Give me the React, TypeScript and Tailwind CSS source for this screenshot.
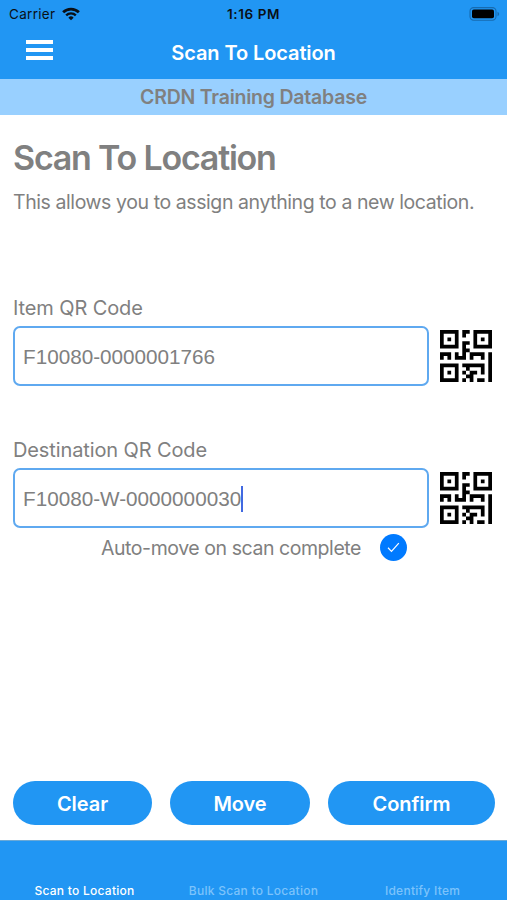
import { useState } from 'react';

const QR_MODULES = [
  '#####.##.#####',
  '#...#.#..#...#',
  '#.#.#....#.#.#',
  '#...#.##.#...#',
  '#####.#..#####',
  '......##......',
  '###.#.#.####.#',
  '#.#.###.#..#.#',
  '.............#',
  '#####.######.#',
  '#...#..#...#.#',
  '#.#.#.#.##.#.#',
  '#...#..##....#',
  '#####.#.#.##.#',
];

// one path for all modules, so no seams show between neighbours
const QR_PATH = QR_MODULES.map((row, y) =>
  row
    .split('')
    .map((cell, x) => (cell === '#' ? `M${x} ${y}h1v1h-1z` : ''))
    .join('')
).join('');

const QrIcon = () => (
  <svg viewBox="0 0 14 14" className="h-[52px] w-[52px]" fill="#000">
    <path d={QR_PATH} />
  </svg>
);

const WifiIcon = () => (
  <svg viewBox="0 0 19 14" className="ml-[6px] h-[14px] w-[18px]" fill="none" stroke="#0a1016">
    <path d="M1.2 5.2a11.8 11.8 0 0 1 16.6 0" strokeWidth="2.9" />
    <path d="M4.4 8.4a7.2 7.2 0 0 1 10.2 0" strokeWidth="2.5" />
    <path d="M9.5 13.6 6.7 10.9a3.9 3.9 0 0 1 5.6 0Z" fill="#0a1016" stroke="none" />
  </svg>
);

const BatteryIcon = () => (
  <svg viewBox="0 0 32 14" className="h-[14px] w-[32px]">
    <rect x="1" y="0.6" width="26" height="12.6" rx="3.6" fill="none" stroke="#176bb0" strokeWidth="1.1" />
    <rect x="3" y="2.5" width="22" height="8.8" rx="1.8" fill="#000" />
    <path d="M28.5 4.7c2.2.8 2.2 3.7 0 4.5Z" fill="#176bb0" />
  </svg>
);

interface CodeFieldProps {
  label: string;
  value: string;
  focused?: boolean;
}

const CodeField = ({ label, value, focused }: CodeFieldProps) => (
  <div>
    <div className="h-[30px] text-[20px] leading-[24px] tracking-[-0.12px]">{label}</div>
    <div className="flex items-center">
      <div className="flex h-[60px] w-[416px] items-center rounded-[7px] border-2 border-[#5fa9f0] pt-px pl-[8px] font-['Liberation_Sans',sans-serif] text-[20.7px]">
        <span>{value}</span>
        {focused && <span className="h-[26px] w-[2px] bg-[#4169e1]" />}
      </div>
      <div className="ml-[10.5px]">
        <QrIcon />
      </div>
    </div>
  </div>
);

const App = () => {
  const [autoMove, setAutoMove] = useState(true);

  return (
    <div className="flex h-[900px] w-[507px] flex-col overflow-hidden bg-white font-['Inter',sans-serif] whitespace-nowrap text-[#808080]">
      <header className="h-[79px] bg-[#2196f3]">
        <div className="grid h-[28px] grid-cols-3 items-center pr-[6px] pl-[9px] text-[13.5px] text-[#0a1016]">
          <div className="flex items-center">
            <span className="w-[47px] tracking-[0.3px]">Carrier</span>
            <WifiIcon />
          </div>
          <div className="-ml-[3px] text-center font-semibold tracking-[0.6px]">1:16 PM</div>
          <div className="flex justify-end">
            <BatteryIcon />
          </div>
        </div>
        <div className="grid h-[49px] grid-cols-[80px_1fr_80px] items-center">
          <button className="-mt-[5px] ml-[26px] flex h-[20px] w-[27px] flex-col justify-between">
            <span className="h-[4px] w-full bg-white" />
            <span className="h-[4px] w-full bg-white" />
            <span className="h-[4px] w-full bg-white" />
          </button>
          <h1 className="text-center text-[20px] font-semibold tracking-[-0.1px] text-white">
            Scan To Location
          </h1>
        </div>
      </header>

      <div className="h-[36px] bg-[#99d0ff] text-center text-[19.5px] leading-[36px] font-semibold tracking-[-0.22px]">
        CRDN Training Database
      </div>

      <main className="flex-1 px-[13px]">
        <h2 className="mt-[21px] text-[34px] leading-[44px] font-semibold tracking-[-1.22px]">
          Scan To Location
        </h2>
        <p className="mt-[10px] text-[19.5px] leading-[24px] tracking-[-0.42px]">
          This allows you to assign anything to a new location.
        </p>
        <div className="mt-[82px] flex flex-col gap-[52px]">
          <CodeField label="Item QR Code" value="F10080-0000001766" />
          <CodeField label="Destination QR Code" value="F10080-W-0000000030" focused />
        </div>
        <div className="mt-[6px] flex items-center pl-[88px]">
          <span className="w-[261px] text-[19.5px] leading-[26px] tracking-[-0.44px]">
            Auto-move on scan complete
          </span>
          <button
            className="ml-[18px] flex h-[27px] w-[27px] items-center justify-center rounded-full bg-[#007aff]"
            onClick={() => setAutoMove(!autoMove)}
          >
            {autoMove && (
              <svg viewBox="0 0 14 12" className="h-[11px] w-[13px]" fill="none" stroke="#fff" strokeWidth="1.3">
                <path d="m1 6.3 3.8 3.9L12.8 1.2" />
              </svg>
            )}
          </button>
        </div>
      </main>

      <div className="flex h-[59px] gap-[18px] pr-[12px] pl-[13px] text-[20px] font-semibold tracking-[-0.05px] text-white">
        <button className="h-[44px] w-[139px] rounded-full bg-[#2196f3] pt-[2px]">Clear</button>
        <button className="h-[44px] w-[140px] rounded-full bg-[#2196f3] pt-[2px]">Move</button>
        <button className="h-[44px] w-[167px] rounded-full bg-[#2196f3] pt-[2px]">Confirm</button>
      </div>

      <nav className="grid h-[60px] grid-cols-3 items-end border-t border-[#6ba9d6] bg-[#2196f3] text-center text-[12px] leading-[18px] font-medium tracking-[0.26px] text-[#7cc3fb]">
        <span className="text-white">Scan to Location</span>
        <span>Bulk Scan to Location</span>
        <span>Identify Item</span>
      </nav>
    </div>
  );
};

export default App;
